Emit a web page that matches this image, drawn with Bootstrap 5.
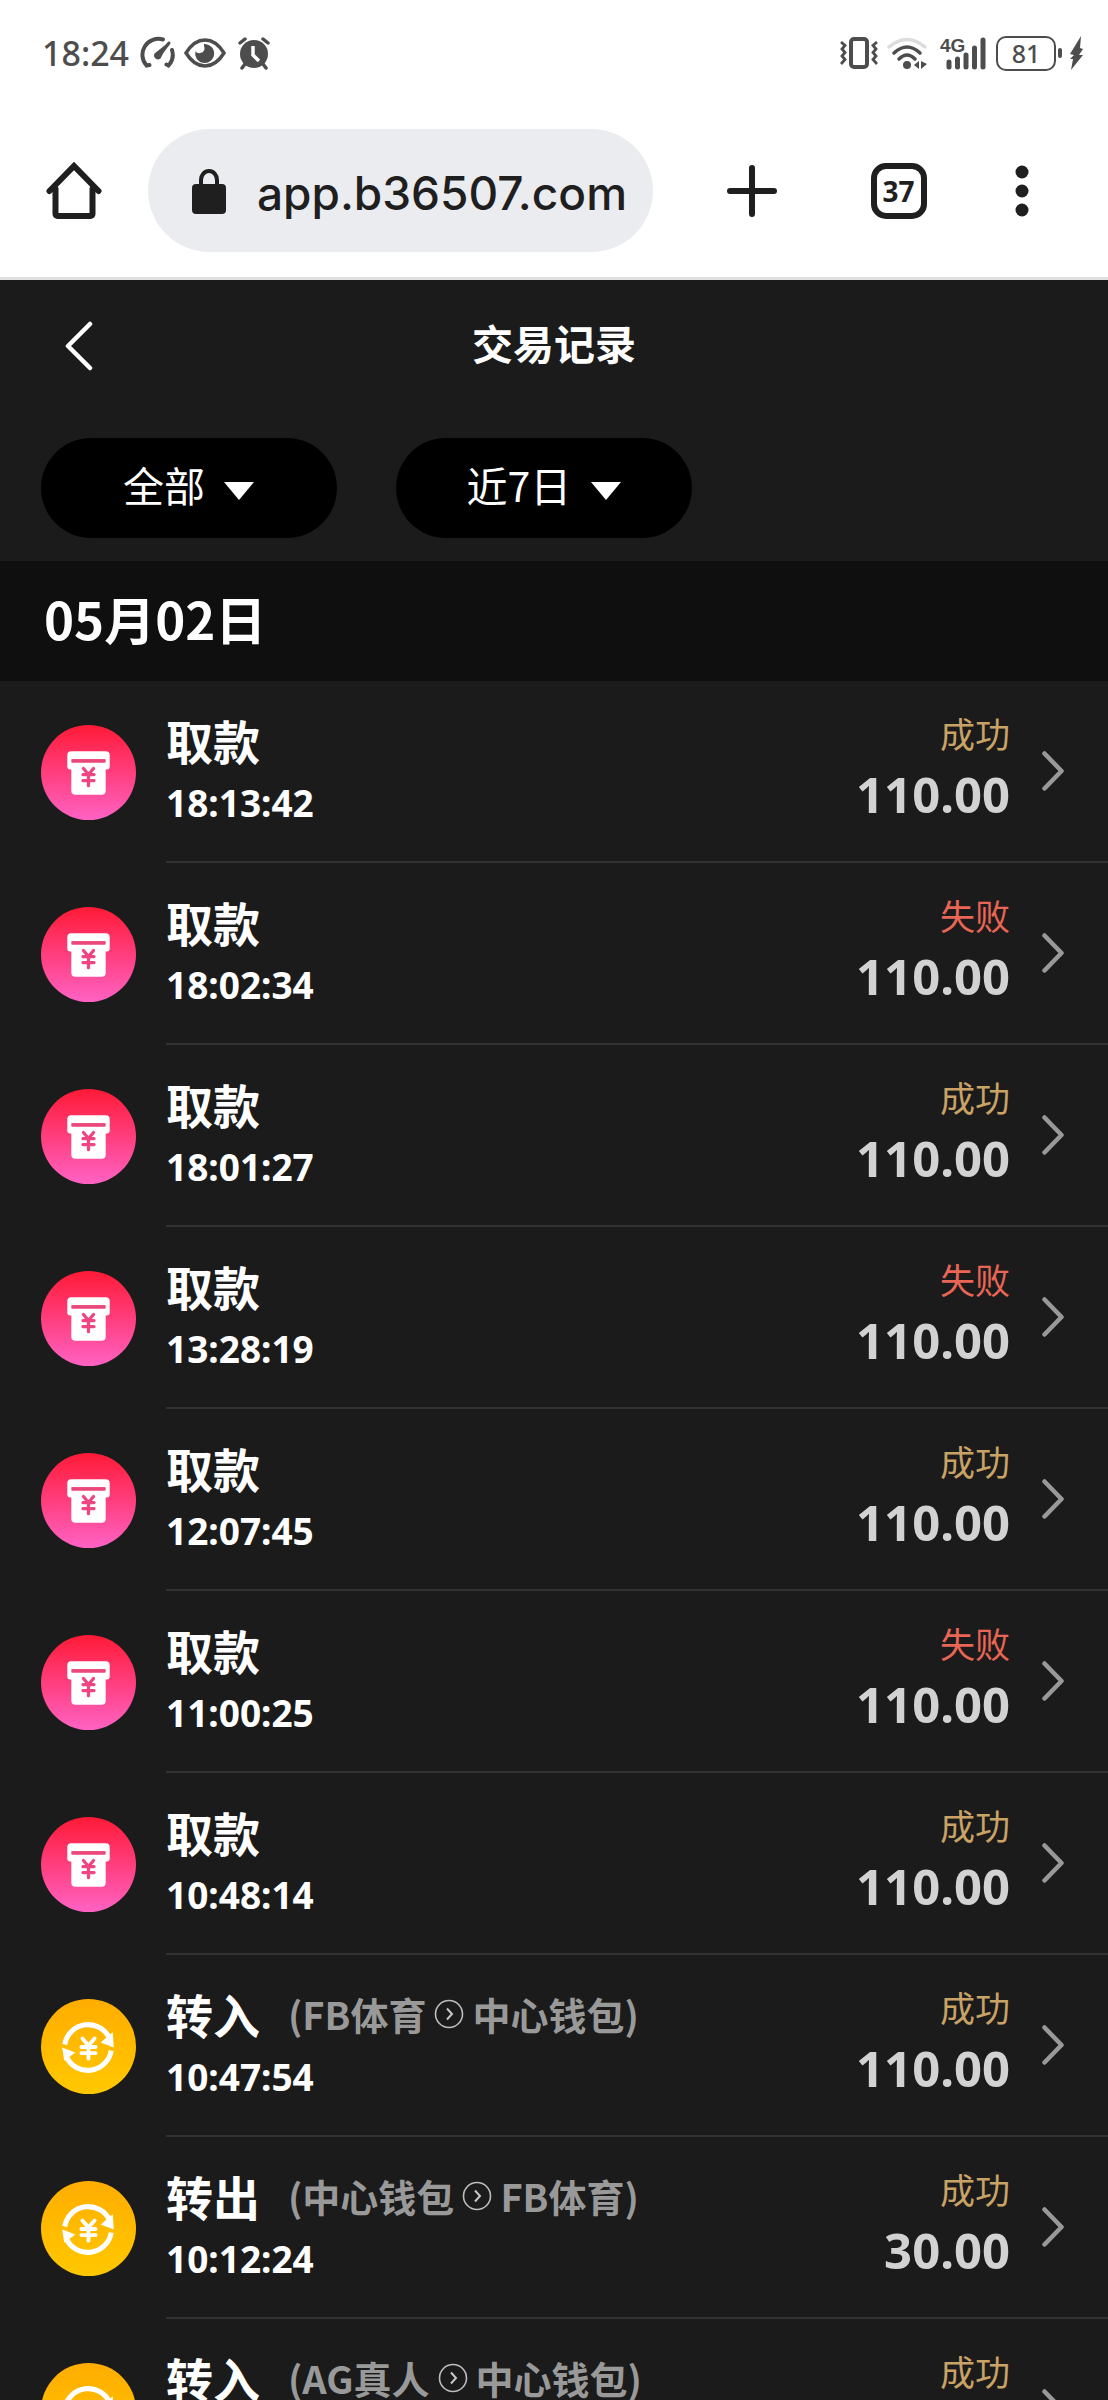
<!DOCTYPE html>
<html lang="zh-CN">
<head>
<meta charset="utf-8">
<meta name="viewport" content="width=device-width, initial-scale=1">
<title>交易记录</title>
<link href="https://cdn.jsdelivr.net/npm/bootstrap@5.3.0/dist/css/bootstrap.min.css" rel="stylesheet">
<style>
  body { background: #1b1b1b; font-family: "Noto Sans CJK SC", "Noto Sans", sans-serif; }
  svg { display: block; flex: none; }

  /* phone status bar */
  .phone-bar { height: 106px; padding: 0 24px 0 42px; color: #4d4d4d; font-family: "Noto Sans", sans-serif; font-weight: 500; }
  .clock { font-size: 34px; line-height: 40px; margin-right: 10px; }
  .battery { width: 60px; height: 35px; border: 2px solid #4d4d4d; border-radius: 10px; font-size: 25px; line-height: 30px; text-align: center; }
  .battery-tip { width: 4px; height: 10px; border-radius: 2px; background: #4d4d4d; margin: 0 7px 0 2px; }

  /* browser toolbar */
  .toolbar { height: 174px; padding: 0 36px 2px 27px; border-bottom: 3px solid #e0e0e0; color: #1f1f1f; }
  .tool { border: 0; padding: 0; background: none; color: inherit; display: flex; align-items: center; justify-content: center; flex: none; height: 96px; }
  .tool-home { width: 94px; }
  .tool-wide { width: 147px; }
  .tool-menu { width: 100px; }
  .address { height: 123px; min-width: 0; margin: 0 25px 0 27px; padding: 0 26px 0 44px; border-radius: 62px; background: #ebecf0; }
  .address input { direction: rtl; border: 0; background: none; outline: 0; padding: 4px 0 0; width: 0; min-width: 0; margin-left: 32px; color: #1f1f1f; font-family: Inter, sans-serif; font-weight: 500; font-size: 46px; line-height: 60px; }
  .tab-count { width: 56px; height: 56px; border: 6px solid #1f1f1f; border-radius: 15px; font-family: "Noto Sans", sans-serif; font-weight: 700; font-size: 28px; line-height: 44px; text-align: center; }

  /* application header */
  .app-head { height: 128px; display: grid; grid-template-columns: 1fr auto 1fr; align-items: center; padding: 0 56px; color: #fff; }
  .app-head h1 { font-size: 41px; line-height: 60px; font-weight: 700; margin: 0 0 4px; }
  .filters { padding: 30px 41px 23px; gap: 59px; }
  .filter-pill { width: 296px; height: 100px; border-radius: 50px; background: #000; color: #fff; gap: 18px; }
  .filter-pill select { appearance: none; border: 0; padding: 0; margin: 0 0 8px; background: none; color: #fff; outline: 0; font-size: 41px; line-height: 60px; }
  .filter-pill svg { margin-top: 6px; }
  .day-band { height: 120px; padding: 0 44px 6px; background: #0f0f0f; color: #fff; font-size: 51px; line-height: 60px; font-weight: 700; margin: 0; }

  /* records */
  .record { display: flex; align-items: center; padding-left: 41px; gap: 30px; text-decoration: none; color: #fff; }
  .record-body { height: 182px; flex: 1; min-width: 0; display: flex; align-items: center; padding-right: 44px; border-bottom: 2px solid #323232; }
  .record-text { height: 122px; }
  .kind { font-size: 47px; line-height: 60px; font-weight: 700; }
  .stamp { font-family: "Noto Sans", sans-serif; font-size: 37px; line-height: 66px; font-weight: 700; }
  .route { font-size: 38px; line-height: 60px; font-weight: 700; color: #999; margin-left: 28px; gap: 8px; white-space: nowrap; }
  .figures { text-align: right; padding-bottom: 14px; margin-right: 32px; }
  .state { font-size: 35px; line-height: 60px; color: #c9a265; }
  .state-failed { color: #e96556; }
  .amount { font-family: "Noto Sans", sans-serif; font-size: 49px; line-height: 62px; font-weight: 700; color: #d2d2d2; }
</style>
<script src="https://cdn.jsdelivr.net/npm/bootstrap@5.3.0/dist/js/bootstrap.bundle.min.js"></script>
</head>
<body>

<svg width="0" height="0" class="position-absolute" aria-hidden="true">
  <defs>
    <linearGradient id="pink" x1="0" y1="0" x2="0" y2="1"><stop offset="0" stop-color="#ff1a36"/><stop offset="1" stop-color="#ff62c4"/></linearGradient>
    <linearGradient id="gold" x1="0" y1="0" x2="0" y2="1"><stop offset="0" stop-color="#ffad00"/><stop offset="1" stop-color="#ffc800"/></linearGradient>
    <symbol id="withdraw" viewBox="0 0 94 94">
      <circle cx="47" cy="47" r="47" fill="url(#pink)"/>
      <path d="M30 26h34a4 4 0 0 1 4 4v11a3 3 0 0 1-3 3h-2V34H31v10h-2a3 3 0 0 1-3-3V30a4 4 0 0 1 4-4z" fill="#fff"/>
      <path d="M30 37h34v28a4 4 0 0 1-4 4H34a4 4 0 0 1-4-4z" fill="#fff"/>
      <path d="M30 35.500h34" stroke="#e8487a" stroke-width="3"/>
      <path d="M42 43l5 6 5-6M47 49v11M41.500 49h11M41.500 55h11" fill="none" stroke="#ef4582" stroke-width="3.200" stroke-linecap="round"/>
    </symbol>
    <symbol id="transfer" viewBox="0 0 94 94">
      <circle cx="47" cy="47" r="47" fill="url(#gold)"/>
      <path d="M23.500 45A23.500 23.500 0 0 1 68 39M69.500 51A23.500 23.500 0 0 1 25 57" fill="none" stroke="#fff" stroke-width="5"/>
      <path d="M71 33l1 15-13-5zM21 48l13 5-11 8z" fill="#fff"/>
      <path d="M41 39l6 7 6-7M47 46v13M40 47.500h14M40 53.500h14" fill="none" stroke="#fff" stroke-width="3.800" stroke-linecap="round"/>
    </symbol>
    <symbol id="chevron" viewBox="0 0 22 40"><path d="M2.500 2.500L19.500 20 2.500 37.500" fill="none" stroke="#999" stroke-width="4.500" stroke-linecap="round" stroke-linejoin="round"/></symbol>
    <symbol id="toward" viewBox="0 0 30 30"><circle cx="15" cy="15" r="13.500" fill="none" stroke="#bdbdbd" stroke-width="1.600"/><path d="M13 9.500l5 5.500-5 5.500" fill="none" stroke="#c8c8c8" stroke-width="2"/></symbol>
    <symbol id="caret" viewBox="0 0 32 20"><path d="M1 1h30L16 19z" fill="#fff"/></symbol>
  </defs>
</svg>

<div class="vh-100 overflow-hidden">
  <header class="bg-white">
    <div class="phone-bar d-flex align-items-center justify-content-between">
      <div class="d-flex align-items-center">
        <span class="clock">18:24</span>
        <svg class="me-2" width="37" height="34" viewBox="0 0 37 34" fill="none" stroke="#4d4d4d" stroke-width="4" stroke-linecap="round">
          <path d="M24 3.500A16 16 0 0 0 7.500 29.500l3-.5M33 14a16 16 0 0 1-3.500 15.500l-2-1"/><path d="M30 7L19.500 20.500" stroke-width="3"/><path d="M30 6L21.500 22.500a4 4 0 0 1-6-5z" fill="#4d4d4d" stroke="none"/>
        </svg>
        <svg class="me-2" width="42" height="30" viewBox="0 0 42 30" fill="none" stroke="#4d4d4d" stroke-width="3.500">
          <path d="M2 15Q10 2 21 2t19 13Q32 28 21 28T2 15z"/><path d="M20 6a9.500 9.500 0 1 1-8.500 7c2 4 9 2 9-2.500 0-2-1-3.500-.5-4.500z" fill="#4d4d4d" stroke="none"/>
        </svg>
        <svg class="ms-1" width="32" height="34" viewBox="0 0 32 34">
          <circle cx="16" cy="18" r="14" fill="#4d4d4d"/><path d="M2 7l5-4M30 7l-5-4M7 28l-3 4M25 28l3 4" stroke="#4d4d4d" stroke-width="3.500" stroke-linecap="round"/><path d="M15 10v9l6 6" fill="none" stroke="#fff" stroke-width="3.500"/>
        </svg>
      </div>
      <div class="d-flex align-items-center">
        <svg class="me-2" width="38" height="34" viewBox="0 0 38 34" fill="none" stroke="#4d4d4d">
          <rect x="11" y="3" width="16" height="28" rx="3" stroke-width="4"/><path d="M1 6l4 3.500L2 13l3 3.500L2 20l3 3.500L1 28M37 6l-4 3.500 3 3.500-3 3.500 3 3.500-3 3.500 4 4.500" stroke-width="2.800"/>
        </svg>
        <svg class="me-2" width="42" height="34" viewBox="0 0 42 34" fill="none" stroke="#4d4d4d" stroke-width="3.500" stroke-linecap="round">
          <path d="M3 11q18-15 36 0" stroke="#dcdcdc"/><path d="M8 17q13-12 26 0M13 23q8-8 16 0"/><circle cx="21" cy="29" r="4" fill="#4d4d4d" stroke="none"/><path d="M33 25v8l-5-4zM35 25v8l6-5z" fill="#4d4d4d" stroke="none"/>
        </svg>
        <svg width="48" height="34" viewBox="0 0 48 34" class="ms-1 me-2">
          <text x="0" y="16" font-family="Liberation Sans, sans-serif" font-size="19" font-weight="700" fill="#4d4d4d">4G</text>
          <path d="M9 26v5M17.500 23v8M26 19v12M34.500 12v19M43 4v27" stroke="#4d4d4d" stroke-width="5" stroke-linecap="round"/>
        </svg>
        <span class="battery">81</span><span class="battery-tip"></span>
        <svg width="15" height="36" viewBox="0 0 15 36"><path d="M12 1L1 19l4 1-4 4h3L2 35 14 20h-4l4-6-3-1z" fill="#4d4d4d"/></svg>
      </div>
    </div>

    <div class="toolbar d-flex align-items-center">
      <button class="tool tool-home" type="button" aria-label="主页">
        <svg width="56" height="58" viewBox="0 0 56 58" fill="none" stroke="#1f1f1f" stroke-width="6" stroke-linecap="round" stroke-linejoin="round"><path d="M9.500 27v25a2 2 0 0 0 2 2h33a2 2 0 0 0 2-2V27"/><path d="M3.500 29L28 4l24.500 25" stroke-linejoin="miter"/></svg>
      </button>
      <div class="address d-flex align-items-center flex-grow-1">
        <svg width="34" height="46" viewBox="0 0 34 46"><rect y="16" width="34" height="30" rx="4" fill="#1f1f1f"/><path d="M9 18v-6a8 9 0 0 1 16 0v6" fill="none" stroke="#1f1f1f" stroke-width="4"/></svg>
        <input class="flex-grow-1" type="text" value="app.b36507.com" aria-label="网址">
      </div>
      <button class="tool tool-wide" type="button" aria-label="新标签页">
        <svg width="50" height="52" viewBox="0 0 50 52"><path d="M25 3v46M3 26h44" stroke="#1f1f1f" stroke-width="6" stroke-linecap="round"/></svg>
      </button>
      <button class="tool tool-wide" type="button"><span class="tab-count">37</span></button>
      <button class="tool tool-menu" type="button" aria-label="菜单">
        <svg width="14" height="52" viewBox="0 0 14 52" fill="#1f1f1f"><circle cx="7" cy="7" r="6.500"/><circle cx="7" cy="26" r="6.500"/><circle cx="7" cy="45" r="6.500"/></svg>
      </button>
    </div>
  </header>

  <main>
    <div class="app-head">
      <a href="#" class="ps-2 pt-1" aria-label="返回"><svg width="30" height="50" viewBox="0 0 30 50"><path d="M26 3L4 25l22 22" fill="none" stroke="#fff" stroke-width="4.500" stroke-linecap="round" stroke-linejoin="round"/></svg></a>
      <h1>交易记录</h1>
    </div>

    <div class="filters d-flex">
      <label class="filter-pill d-flex align-items-center justify-content-center">
        <select aria-label="类型"><option>全部</option></select>
        <svg width="32" height="20"><use href="#caret"/></svg>
      </label>
      <label class="filter-pill d-flex align-items-center justify-content-center">
        <select aria-label="时间"><option>近7日</option></select>
        <svg width="32" height="20"><use href="#caret"/></svg>
      </label>
    </div>

    <h2 class="day-band d-flex align-items-center">05月02日</h2>

    <a class="record" href="#"><svg width="95" height="95"><use href="#withdraw"/></svg>
      <div class="record-body"><div class="record-text flex-grow-1"><div class="kind">取款</div><div class="stamp">18:13:42</div></div>
        <div class="figures"><div class="state">成功</div><div class="amount">110.00</div></div><svg width="22" height="40"><use href="#chevron"/></svg></div></a>
    <a class="record" href="#"><svg width="95" height="95"><use href="#withdraw"/></svg>
      <div class="record-body"><div class="record-text flex-grow-1"><div class="kind">取款</div><div class="stamp">18:02:34</div></div>
        <div class="figures"><div class="state state-failed">失败</div><div class="amount">110.00</div></div><svg width="22" height="40"><use href="#chevron"/></svg></div></a>
    <a class="record" href="#"><svg width="95" height="95"><use href="#withdraw"/></svg>
      <div class="record-body"><div class="record-text flex-grow-1"><div class="kind">取款</div><div class="stamp">18:01:27</div></div>
        <div class="figures"><div class="state">成功</div><div class="amount">110.00</div></div><svg width="22" height="40"><use href="#chevron"/></svg></div></a>
    <a class="record" href="#"><svg width="95" height="95"><use href="#withdraw"/></svg>
      <div class="record-body"><div class="record-text flex-grow-1"><div class="kind">取款</div><div class="stamp">13:28:19</div></div>
        <div class="figures"><div class="state state-failed">失败</div><div class="amount">110.00</div></div><svg width="22" height="40"><use href="#chevron"/></svg></div></a>
    <a class="record" href="#"><svg width="95" height="95"><use href="#withdraw"/></svg>
      <div class="record-body"><div class="record-text flex-grow-1"><div class="kind">取款</div><div class="stamp">12:07:45</div></div>
        <div class="figures"><div class="state">成功</div><div class="amount">110.00</div></div><svg width="22" height="40"><use href="#chevron"/></svg></div></a>
    <a class="record" href="#"><svg width="95" height="95"><use href="#withdraw"/></svg>
      <div class="record-body"><div class="record-text flex-grow-1"><div class="kind">取款</div><div class="stamp">11:00:25</div></div>
        <div class="figures"><div class="state state-failed">失败</div><div class="amount">110.00</div></div><svg width="22" height="40"><use href="#chevron"/></svg></div></a>
    <a class="record" href="#"><svg width="95" height="95"><use href="#withdraw"/></svg>
      <div class="record-body"><div class="record-text flex-grow-1"><div class="kind">取款</div><div class="stamp">10:48:14</div></div>
        <div class="figures"><div class="state">成功</div><div class="amount">110.00</div></div><svg width="22" height="40"><use href="#chevron"/></svg></div></a>
    <a class="record" href="#"><svg width="95" height="95"><use href="#transfer"/></svg>
      <div class="record-body"><div class="record-text flex-grow-1"><div class="d-flex"><div class="kind">转入</div><div class="route d-flex align-items-center"><span>(FB体育</span><svg width="30" height="30"><use href="#toward"/></svg><span>中心钱包)</span></div></div><div class="stamp">10:47:54</div></div>
        <div class="figures"><div class="state">成功</div><div class="amount">110.00</div></div><svg width="22" height="40"><use href="#chevron"/></svg></div></a>
    <a class="record" href="#"><svg width="95" height="95"><use href="#transfer"/></svg>
      <div class="record-body"><div class="record-text flex-grow-1"><div class="d-flex"><div class="kind">转出</div><div class="route d-flex align-items-center"><span>(中心钱包</span><svg width="30" height="30"><use href="#toward"/></svg><span>FB体育)</span></div></div><div class="stamp">10:12:24</div></div>
        <div class="figures"><div class="state">成功</div><div class="amount">30.00</div></div><svg width="22" height="40"><use href="#chevron"/></svg></div></a>
    <a class="record" href="#"><svg width="95" height="95"><use href="#transfer"/></svg>
      <div class="record-body"><div class="record-text flex-grow-1"><div class="d-flex"><div class="kind">转入</div><div class="route d-flex align-items-center"><span>(AG真人</span><svg width="30" height="30"><use href="#toward"/></svg><span>中心钱包)</span></div></div></div>
        <div class="figures"><div class="state">成功</div><div class="amount">30.00</div></div><svg width="22" height="40"><use href="#chevron"/></svg></div></a>
  </main>
</div>
</body>
</html>
